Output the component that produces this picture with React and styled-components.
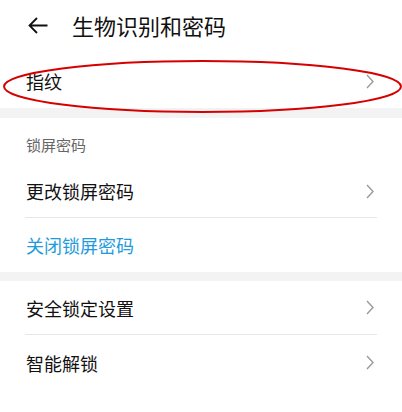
import React from "react";
import styled, { createGlobalStyle } from "styled-components";

const Global = createGlobalStyle`
  html, body {
    margin: 0;
    padding: 0;
    background: #fff;
  }
  body {
    font-family: "Noto Sans CJK SC", "Noto Sans", sans-serif;
    -webkit-font-smoothing: antialiased;
  }
`;

const Page = styled.div`
  position: relative;
  width: 402px;
  height: 412px;
  background: #fff;
  overflow: hidden;
`;

const Header = styled.header`
  display: flex;
  align-items: center;
  height: 54px;
  padding: 0 0 4px 28px;
  box-sizing: border-box;
`;

const Back = styled.button`
  display: flex;
  align-items: center;
  padding: 0;
  border: none;
  background: none;
  margin-right: 24px;
`;

const Title = styled.h1`
  margin: 0;
  font-size: 22px;
  font-weight: 400;
  color: #111;
  line-height: 1;
`;

const Band = styled.div`
  height: ${(p) => p.h}px;
  background: #f3f3f3;
`;

const SectionLabel = styled.div`
  height: 47px;
  box-sizing: border-box;
  padding: 17px 26px 0;
  font-size: 15px;
  line-height: 20px;
  color: #666;
`;

const Row = styled.div`
  display: flex;
  align-items: center;
  justify-content: space-between;
  height: ${(p) => p.h}px;
  padding: 0 28px 0 26px;
  box-sizing: border-box;
`;

const Label = styled.span`
  font-size: 18px;
  line-height: 1;
  color: ${(p) => (p.link ? "#1f9bdc" : "#111")};
`;

const Divider = styled.div`
  height: 1px;
  margin: 0 25px;
  background: #e6e6e6;
`;

const Mark = styled.svg`
  position: absolute;
  left: 0;
  top: 0;
  pointer-events: none;
`;

const Chevron = () => (
  <svg width="8" height="15" viewBox="0 0 8 15">
    <polyline points="1,1 7,7.5 1,14" fill="none" stroke="#9a9a9a" strokeWidth="1.4" />
  </svg>
);

const Item = ({ label, h, link, arrow = true }) => (
  <Row h={h}>
    <Label link={link}>{label}</Label>
    {arrow && <Chevron />}
  </Row>
);

export default function App() {
  return (
    <Page>
      <Global />
      <Header>
        <Back aria-label="back">
          <svg width="20" height="17" viewBox="0 0 20 17">
            <path d="M19.5 8.5H1.5M9 1L1.5 8.5L9 16" fill="none" stroke="#111" strokeWidth="1.8" />
          </svg>
        </Back>
        <Title>生物识别和密码</Title>
      </Header>

      <Item label="指纹" h={54} />
      <Band h={10} />

      <SectionLabel>锁屏密码</SectionLabel>
      <Item label="更改锁屏密码" h={52} />
      <Divider />
      <Item label="关闭锁屏密码" h={54} link arrow={false} />
      <Band h={9} />

      <Item label="安全锁定设置" h={53} />
      <Divider />
      <Item label="智能解锁" h={55} />

      <Mark width="402" height="412">
        <ellipse cx="202.5" cy="86.5" rx="198.5" ry="25.5" fill="none" stroke="#d60000" strokeWidth="2" />
      </Mark>
    </Page>
  );
}
